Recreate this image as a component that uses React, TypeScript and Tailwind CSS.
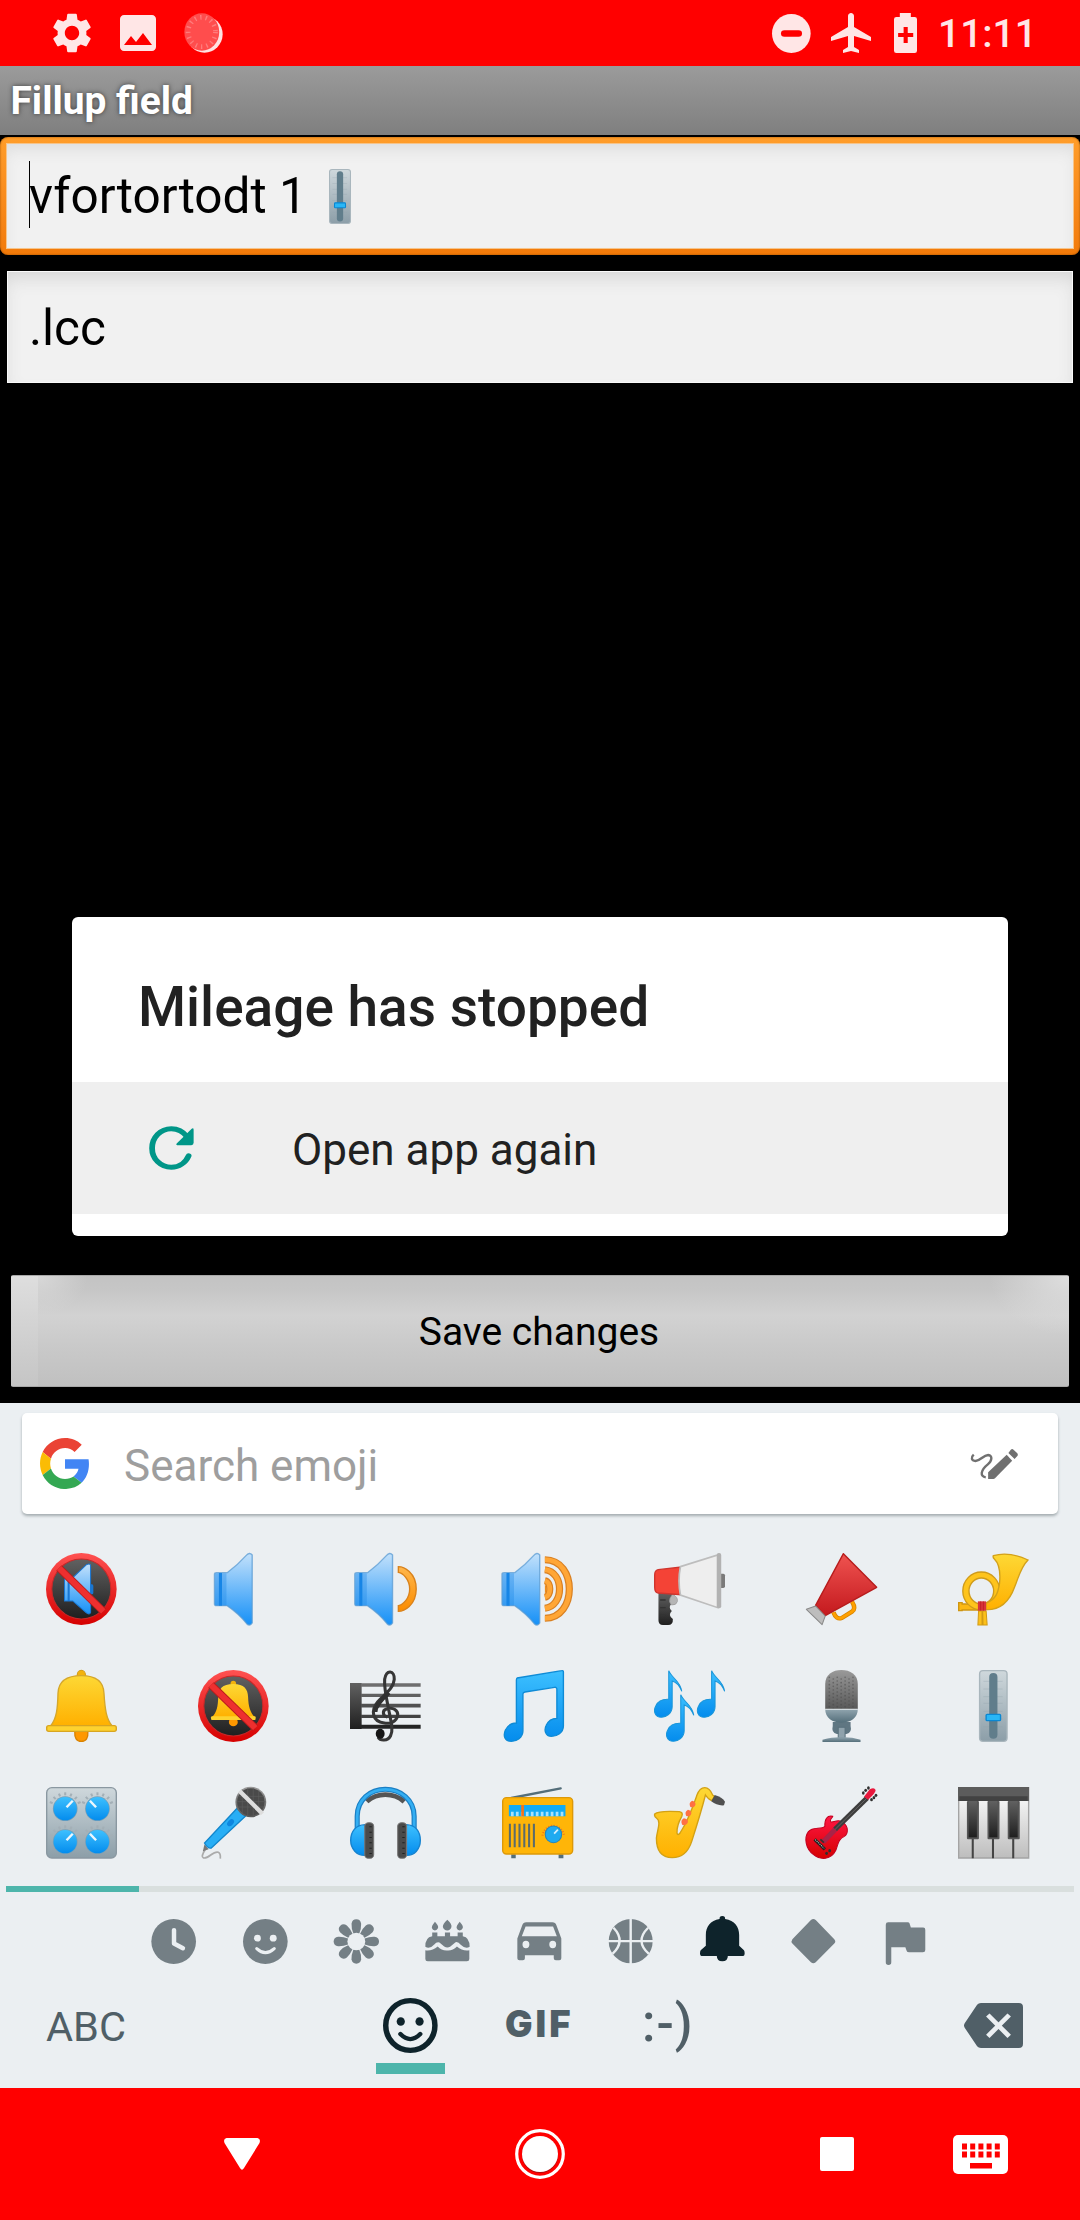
import type { ReactNode } from "react";
import { MdAirplanemodeActive, MdImage, MdSettings } from "react-icons/md";

type ArtProps = { vb: string; className?: string; children: ReactNode };

/* Drawing surface whose units are stretched to fill the element. */
function Art({ vb, className = "", children }: ArtProps) {
  return (
    <svg viewBox={vb} preserveAspectRatio="none" className={`block shrink-0 overflow-visible ${className}`} fill="none">
      {children}
    </svg>
  );
}

type GradProps = { id: string; from: string; to: string };
function Grad({ id, from, to }: GradProps) {
  return (
    <linearGradient id={id} x1="0" y1="0" x2="0" y2="1">
      <stop offset="0" stopColor={from} />
      <stop offset="1" stopColor={to} />
    </linearGradient>
  );
}

function Palette() {
  return (
    <svg className="absolute h-0 w-0">
      <defs>
        <Grad id="red" from="#ff5252" to="#d50000" />
        <Grad id="dark" from="#616161" to="#1f1f1f" />
        <Grad id="grey" from="#9a9a9a" to="#585858" />
        <Grad id="speaker" from="#c3e1fb" to="#1590f7" />
        <Grad id="blue" from="#3dc0ff" to="#048ced" />
        <Grad id="gold" from="#fdd835" to="#ffb000" />
        <Grad id="orange" from="#ffb74d" to="#fb8c00" />
        <Grad id="cone" from="#ef5350" to="#c4191e" />
        <Grad id="guitar" from="#ff1744" to="#d50000" />
        <Grad id="steel" from="#cfd8dc" to="#8c9ea8" />
        <Grad id="slate" from="#90a4ae" to="#546e7a" />
        <Grad id="ivory" from="#ffffff" to="#bdbdbd" />
      </defs>
    </svg>
  );
}

function SpeakerShape() {
  return (
    <g>
      <path d="M629 127H660Q690 105 715 76Q725 64 733 74V278Q726 289 717 280Q694 250 660 226H629Q623 226 623 221V132Q623 127 629 127Z" fill="url(#speaker)" stroke="#5a9bd3" strokeOpacity=".75" strokeWidth="4" />
      <path d="M625 129H658V225H625Z" fill="#1e88e5" fillOpacity=".35" />
      <path d="M636 128H645V226H636Z" fill="#1785e6" />
    </g>
  );
}

function Muted() {
  return (
    <Art vb="134 68 207 216" className="h-[72px] w-[71px]">
      <ellipse cx="237" cy="176" rx="103" ry="108" fill="url(#red)" />
      <ellipse cx="237" cy="176" rx="86" ry="90" fill="url(#dark)" stroke="#c62828" strokeWidth="3" />
      <path d="M264 162h4q4 0 4 5v20q0 5-4 5h-4z" fill="#1976d2" />
      <path d="M188 142H212L252 103Q264 97 264 108V246Q261 255 251 247L212 212H188Z" fill="url(#speaker)" stroke="#1976d2" strokeWidth="3" />
      <path d="M197 142h6v70h-6z" fill="#1976d2" />
      <path d="M172 113L301 243" stroke="#b71c1c" strokeWidth="23" />
      <path d="M172 113L301 243" stroke="#ee2f2f" strokeWidth="18" />
    </Art>
  );
}

function Speaker() {
  return (
    <Art vb="575 68 207 216" className="h-[72px] w-[71px]">
      <SpeakerShape />
    </Art>
  );
}

function SpeakerMid() {
  return (
    <Art vb="1016 68 207 216" className="h-[72px] w-[71px]">
      <g transform="translate(407 0)"><SpeakerShape /></g>
      <path d="M1157 109C1172 109 1209 126 1209 176C1209 226 1172 243 1157 243V226C1170 224 1190 205 1190 176C1190 147 1170 128 1157 126Z" fill="url(#orange)" stroke="#d9821b" strokeWidth="4" />
    </Art>
  );
}

function SpeakerLoud() {
  const arcs = [
    "M1583 88C1678 88 1678 264 1583 264",
    "M1583 118C1640 125 1640 227 1583 234",
    "M1583 151C1602 155 1602 197 1583 201",
  ];
  return (
    <Art vb="1458 68 207 216" className="h-[72px] w-[71px]">
      <g transform="translate(835 0)"><SpeakerShape /></g>
      {arcs.map((d) => (
        <g key={d}>
          <path d={d} stroke="#d98022" strokeWidth="21" />
          <path d={d} stroke="#ffa636" strokeWidth="14" />
        </g>
      ))}
      <path d="M1583 160Q1593 176 1583 191Z" fill="#ef8c1c" />
    </Art>
  );
}

function Loudspeaker() {
  return (
    <Art vb="331 68 207 216" className="h-[72px] w-[71px]">
      <path d="M344 187H388V200Q370 209 384 218Q370 231 383 242Q370 255 386 266Q387 284 372 284H357Q344 284 344 270Z" fill="url(#dark)" />
      <path d="M349 209h16M349 232h16M349 255h16" stroke="#333" strokeWidth="4" />
      <path d="M385 192Q402 200 399 214Q396 225 382 224Q373 215 378 203Z" fill="#b5b5b5" stroke="#999" strokeWidth="2" />
      <rect x="522" y="130" width="16" height="43" rx="5" fill="#7a7a7a" />
      <path d="M343 118L410 110V193L343 188Q333 187 333 170V135Q333 120 343 118Z" fill="#f44336" stroke="#cf342d" strokeWidth="4" />
      <path d="M408 109L517 74V232L408 194Q400 152 408 109Z" fill="#eeeeee" stroke="#bdbdbd" strokeWidth="5" />
      <rect x="514" y="68" width="13" height="166" rx="6" fill="#b2b2b2" />
    </Art>
  );
}

function Megaphone() {
  return (
    <Art vb="772 68 207 216" className="h-[72px] w-[71px]">
      <path d="M852 246Q860 269 876 263L906 244Q919 235 906 214" stroke="#d98500" strokeWidth="13" />
      <path d="M852 246Q860 269 876 263L906 244Q919 235 906 214" stroke="#ffa000" strokeWidth="8" />
      <path d="M881 70L978 171L828 256L800 225Z" fill="url(#cone)" stroke="#b71c1c" strokeWidth="4" strokeLinejoin="round" />
      <path d="M773 237L800 227L828 257L819 283Z" fill="#bdbdbd" stroke="#8a8a8a" strokeWidth="3" strokeLinejoin="round" />
    </Art>
  );
}

function Horn() {
  return (
    <Art vb="1214 68 207 216" className="h-[72px] w-[71px]">
      <path d="M1216 217h10v4h50v18h-50v2h-10z" fill="#fbb813" stroke="#cf9612" strokeWidth="4" />
      <path d="M1274 242h10v42h-12zM1286 242h10l3 42h-12z" fill="#fcc01a" stroke="#d29b14" strokeWidth="3" />
      <ellipse cx="1282" cy="182" rx="45" ry="48" stroke="#cf9b1b" strokeWidth="22" />
      <ellipse cx="1282" cy="182" rx="45" ry="48" stroke="#fec41c" strokeWidth="14" />
      <path d="M1317 76Q1362 62 1418 89C1396 112 1392 138 1379 170C1365 210 1340 240 1295 238V219C1327 206 1331 184 1335 160C1338 130 1337 103 1320 86Q1315 81 1317 76Z" fill="url(#gold)" stroke="#d3a11a" strokeWidth="4" />
      <path d="M1272 213h24v28h-24z" fill="#d9353b" />
      <path d="M1280 213v28M1288 213v28" stroke="#b71c1c" strokeWidth="2" />
    </Art>
  );
}

function Bell() {
  return (
    <Art vb="134 -90 207 216" className="h-[72px] w-[71px]">
      <ellipse cx="237" cy="-75" rx="12" ry="14" fill="#f3b20c" stroke="#d2990e" strokeWidth="3" />
      <path d="M218 94H256Q258 124 237 124Q216 124 218 94Z" fill="#ff9800" stroke="#d98200" strokeWidth="4" />
      <path d="M237 -73C285 -73 302 -50 303 -20C306 30 310 57 327 78H147C165 57 168 25 169 -20C170 -50 188 -73 237 -73Z" fill="url(#gold)" stroke="#d5a72b" strokeWidth="4" />
      <rect x="136" y="77" width="203" height="17" rx="6" fill="#fdd22f" stroke="#d8a521" strokeWidth="4" />
    </Art>
  );
}

function BellOff() {
  return (
    <Art vb="575 -90 207 216" className="h-[72px] w-[71px]">
      <ellipse cx="678" cy="18" rx="103" ry="108" fill="url(#red)" />
      <ellipse cx="678" cy="18" rx="86" ry="90" fill="url(#dark)" stroke="#c62828" strokeWidth="3" />
      <ellipse cx="678" cy="-50" rx="8" ry="8" fill="#f3b20c" />
      <ellipse cx="678" cy="66" rx="13" ry="13" fill="#ff9800" />
      <path d="M678 -48C710 -48 720 -32 721 -10C722 20 727 36 740 51H616C630 36 633 20 634 -10C635 -32 645 -48 678 -48Z" fill="url(#gold)" />
      <rect x="613" y="49" width="130" height="11" rx="3" fill="#fdd22f" />
      <path d="M613 -45L742 84" stroke="#b71c1c" strokeWidth="23" />
      <path d="M613 -45L742 84" stroke="#ee2f2f" strokeWidth="18" />
    </Art>
  );
}

function Score() {
  return (
    <Art vb="1016 -90 207 216" className="h-[72px] w-[71px]">
      <path d="M1016 -51h34v138h-34z" fill="url(#dark)" />
      <path d="M1048 -45h174" stroke="#6e6e6e" strokeWidth="11" />
      <path d="M1048 -14h174" stroke="#606060" strokeWidth="10" />
      <path d="M1048 17h174" stroke="#505050" strokeWidth="11" />
      <path d="M1048 49h174" stroke="#424242" strokeWidth="10" />
      <path d="M1048 80h174" stroke="#242424" strokeWidth="12" />
      <path d="M1125 51C1110 48 1110 31 1122 27C1142 19 1157 32 1155 46C1152 66 1132 72 1116 69C1079 64 1077 30 1097 5C1116 -17 1143 -33 1145 -62C1146 -90 1122 -93 1117 -62C1115 -35 1123 -2 1130 35C1138 75 1142 92 1134 108C1126 124 1104 123 1098 112" stroke="#363636" strokeWidth="9" />
      <path d="M1090 36C1090 20 1110 -4 1130 -22" stroke="#303030" strokeWidth="12" />
      <ellipse cx="1104" cy="101" rx="13" ry="15" fill="#161616" />
    </Art>
  );
}

function BeamedNotes() {
  return (
    <Art vb="1458 -90 207 216" className="h-[72px] w-[71px]">
      <path d="M1502 -66L1632 -88Q1637 -89 1637 -84V78C1637 98 1618 109 1602 109C1584 109 1580 90 1587 76C1594 60 1605 55 1618 55V-32Q1618 -39 1611 -38L1525 -24Q1519 -23 1519 -18V92C1519 113 1500 124 1485 124C1465 124 1461 106 1468 90C1476 74 1488 69 1500 69V-60Q1500 -65 1502 -66Z" fill="url(#blue)" stroke="#0f8bd6" strokeWidth="4" />
    </Art>
  );
}

const noteShape =
  "M374 -88C382 -66 408 -58 412 -26C404 -46 396 -54 384 -57V20C384 40 366 52 352 52C334 52 328 34 336 18C343 2 358 -3 374 -2Z";

function TripleNotes() {
  return (
    <Art vb="331 -90 207 216" className="h-[72px] w-[71px]">
      {["translate(0 0)", "translate(125 0)", "translate(35 72)"].map((t) => (
        <path key={t} d={noteShape} transform={t} fill="url(#blue)" stroke="#1a96da" strokeWidth="3" />
      ))}
    </Art>
  );
}

function StudioMic() {
  const dots: ReactNode[] = [];
  for (let r = 0; r < 9; r++) {
    for (let c = 0; c < 7; c++) {
      dots.push(<circle key={`${r}-${c}`} cx={840 + c * 11.5} cy={-68 + r * 11 + (c % 2) * 5} r="2.5" fill="#4b4b4b" fillOpacity=".55" />);
    }
  }
  return (
    <Art vb="772 -90 207 216" className="h-[72px] w-[71px]">
      <path d="M828 27V-48C828 -76 850 -90 875 -90C901 -90 923 -76 923 -48V27Z" fill="url(#grey)" />
      {dots}
      <path d="M850 66h52v12q5 20-12 24h-28q-17-4-12-24z" fill="#5f7682" />
      <path d="M828 28H923C923 54 902 68 875 68C849 68 828 54 828 28Z" fill="url(#slate)" />
      <path d="M828 28h95" stroke="#e0e6e8" strokeWidth="3" />
      <path d="M866 82h20v32h-20z" fill="#8fa2ac" stroke="#5a717d" strokeWidth="3" />
      <path d="M820 126V119Q850 112 866 112H886Q905 112 931 119V126Z" fill="url(#slate)" />
    </Art>
  );
}

function SliderShape() {
  return (
    <g>
      <rect x="1277" y="-88" width="80" height="212" rx="10" fill="url(#steel)" stroke="#a9b6bd" strokeWidth="4" />
      {[-56, -33, -10, 10, 34, 57, 80].map((y) => (
        <path key={y} d={`M1288 ${y}h56`} stroke="#92a3ac" strokeOpacity=".5" strokeWidth="2" />
      ))}
      <rect x="1305" y="-81" width="24" height="197" rx="12" fill="#607d8b" />
      <rect x="1296" y="43" width="42" height="19" rx="3" fill="#29b6f6" stroke="#0b87d2" strokeWidth="4" />
    </g>
  );
}

function LevelSlider() {
  return (
    <Art vb="1214 -90 207 216" className="h-[72px] w-[71px]">
      <SliderShape />
    </Art>
  );
}

function ControlKnobs() {
  const knobs = [
    { x: 190, y: 327, s: 1 },
    { x: 284, y: 327, s: -1 },
    { x: 190, y: 426, s: 1 },
    { x: 284, y: 426, s: -1 },
  ];
  return (
    <Art vb="134 262 207 216" className="h-[72px] w-[71px]">
      <rect x="136" y="264" width="203" height="211" rx="15" fill="url(#steel)" stroke="#8a98a1" strokeWidth="4" />
      {knobs.map(({ x, y, s }) => (
        <g key={`${x}-${y}`}>
          {[-66, -44, -22, 0, 22, 44, 66].map((a) => (
            <path key={a} d={`M${x} ${y - 49}v9`} transform={`rotate(${a} ${x} ${y})`} stroke="#a3afb6" strokeWidth="6" />
          ))}
          <ellipse cx={x} cy={y} rx="36" ry="37" fill="#77a0b8" />
          <ellipse cx={x} cy={y} rx="34" ry="35" fill="url(#blue)" />
          <path d={`M${x + 4 * s} ${y - 4}L${x + 22 * s} ${y - 24}`} stroke="#eef7fd" strokeWidth="7" />
        </g>
      ))}
    </Art>
  );
}

function Microphone() {
  return (
    <Art vb="575 262 207 216" className="h-[72px] w-[71px]">
      <path d="M597 448C574 484 598 477 612 466C632 451 642 456 640 477" stroke="#ababab" strokeWidth="5" />
      <path d="M594 434L606 449L589 455Z" fill="#777" />
      <path d="M689 326L713 350L614 445Q604 448 594 430Z" fill="#28aef5" stroke="#1286cc" strokeWidth="4" />
      <ellipse cx="670" cy="369" rx="8" ry="12" fill="#0d86df" transform="rotate(42 670 369)" />
      <ellipse cx="729" cy="307" rx="45" ry="46" fill="url(#grey)" />
      <ellipse cx="729" cy="307" rx="40" ry="41" fill="#4a4a4a" />
      <path d="M704 270v70M720 265v85M736 265v85M752 272v70M690 290h78M688 306h84M688 322h80" stroke="#5e5e5e" strokeWidth="2" />
      <path d="M696 274L763 342" stroke="#dddddd" strokeWidth="13" />
    </Art>
  );
}

function Headphones() {
  return (
    <Art vb="1016 262 207 216" className="h-[72px] w-[71px]">
      <path d="M1065 306C1095 278 1143 278 1174 306" stroke="#555" strokeWidth="14" />
      <path d="M1037 395V350C1037 300 1075 269 1119 269C1163 269 1203 300 1203 350V395" stroke="#1b7fc4" strokeWidth="15" />
      <path d="M1037 395V350C1037 300 1075 269 1119 269C1163 269 1203 300 1203 350V395" stroke="#33aef2" strokeWidth="8" />
      <path d="M1060 375C1032 376 1018 396 1018 422C1018 448 1036 468 1060 467ZM1180 375C1208 376 1221 396 1221 422C1221 448 1204 468 1180 467Z" fill="url(#blue)" stroke="#1683cf" strokeWidth="4" />
      {[1058, 1154].map((x) => (
        <g key={x}>
          <rect x={x + 1} y="369" width="26" height="107" rx="11" fill="#4a4a4a" stroke="#777" strokeWidth="3" />
          <path d={`M${x + 18} 380v86`} stroke="#222" strokeWidth="7" strokeDasharray="3 13" />
        </g>
      ))}
    </Art>
  );
}

function Radio() {
  return (
    <Art vb="1458 262 207 216" className="h-[72px] w-[71px]">
      <path d="M1485 295L1629 266" stroke="#546e7a" strokeWidth="7" strokeLinecap="round" />
      <path d="M1485 464h13v12h-13zM1623 464h14v12h-14z" fill="#546e7a" />
      <rect x="1460" y="294" width="204" height="169" rx="11" fill="#ffb508" stroke="#dd9909" strokeWidth="4" />
      <path d="M1478 316h165v34h-165z" fill="#12abf4" />
      <path d="M1484 343h156" stroke="#a9e1fb" strokeWidth="13" strokeDasharray="8 6.5" />
      <path d="M1514 316h8v34h-8z" fill="#f4741b" />
      <path d="M1481 372v71M1495 372v71M1509 372v71M1523 372v71M1537 372v71M1551 372v71" stroke="#5b6b6b" strokeWidth="6" />
      <path d="M1576 408A32 36 0 0 1 1639 408" stroke="#f4731b" strokeWidth="6" strokeDasharray="3 5" />
      <ellipse cx="1608" cy="404" rx="24" ry="25" fill="#1eaaf0" stroke="#2186bd" strokeWidth="3" />
      <path d="M1610 402l11-12" stroke="#d5effc" strokeWidth="5" />
    </Art>
  );
}

function Saxophone() {
  return (
    <Art vb="331 262 207 216" className="h-[72px] w-[71px]">
      <path d="M333 343Q345 332 405 336Q417 338 412 350C402 368 397 380 398 400Q400 409 407 400C432 360 445 320 456 287Q464 264 479 264Q493 264 502 286L508 291L500 303Q490 300 481 286C470 330 455 380 441 425C430 460 412 474 384 474C352 474 338 450 338 415C342 385 352 365 338 355Q331 350 333 343Z" fill="url(#gold)" stroke="#d3a114" strokeWidth="4" />
      <path d="M508 286Q530 292 538 306L535 317Q515 319 498 305Z" fill="#505050" />
      <path d="M442 303q10 2 10 11q-2 11-15 8q-6-13 5-19zM430 330q10 2 10 11q-2 11-15 8q-6-13 5-19zM418 356q12 2 12 11q-4 12-17 8q-6-13 5-19z" fill="#ff7043" />
    </Art>
  );
}

function Guitar() {
  return (
    <Art vb="772 262 207 216" className="h-[72px] w-[71px]">
      <path d="M827 380C826 360 833 346 850 350C848 356 840 358 844 366C850 371 864 356 880 368C896 380 896 402 884 410C864 420 866 435 859 452C845 481 815 482 794 465C770 447 766 414 779 396C792 380 816 391 827 380Z" fill="url(#guitar)" stroke="#c3001f" strokeWidth="3" />
      <path d="M822 427L861 385" stroke="#a92347" strokeWidth="15" />
      <path d="M857 389L950 295" stroke="#3d3d3d" strokeWidth="15" />
      <path d="M857 389L950 295" stroke="#777" strokeWidth="2" />
      <path d="M797 419L827 449" stroke="#222" strokeWidth="9" />
      <path d="M799 420L825 446" stroke="#cfcfcf" strokeWidth="3" strokeDasharray="3 3" />
      <path d="M814 419l10 10" stroke="#333" strokeWidth="5" />
      <path d="M941 291L958 269Q971 261 975 271Q976 279 953 300Z" fill="#e8173c" />
      {[[939, 280], [946, 272], [954, 265], [963, 300], [970, 294], [976, 287], [832, 461], [841, 453]].map(([x, y]) => (
        <ellipse key={`${x}-${y}`} cx={x} cy={y} rx="4" ry="5" fill="#2f2f2f" />
      ))}
    </Art>
  );
}

function Piano() {
  return (
    <Art vb="1214 262 207 216" className="h-[72px] w-[71px]">
      <path d="M1216 264h204v211h-204z" fill="url(#ivory)" stroke="#a4a4a4" strokeWidth="4" />
      <path d="M1257 418v58M1316 418v58M1375 418v58" stroke="#444" strokeWidth="6" />
      <path d="M1214 262h207v42h-207z" fill="#5c5c5c" />
      <path d="M1218 290h199v14h-199z" fill="#424242" />
      {[1240, 1300, 1359].map((x) => (
        <g key={x}>
          <rect x={x} y="304" width="35" height="115" rx="3" fill="#555" />
          <rect x={x + 5} y="304" width="24" height="109" fill="url(#dark)" />
        </g>
      ))}
    </Art>
  );
}

const emojiGrid: { name: string; Icon: () => ReactNode }[] = [
  { name: "muted speaker", Icon: Muted },
  { name: "speaker low", Icon: Speaker },
  { name: "speaker medium", Icon: SpeakerMid },
  { name: "speaker high", Icon: SpeakerLoud },
  { name: "loudspeaker", Icon: Loudspeaker },
  { name: "megaphone", Icon: Megaphone },
  { name: "postal horn", Icon: Horn },
  { name: "bell", Icon: Bell },
  { name: "bell with slash", Icon: BellOff },
  { name: "musical score", Icon: Score },
  { name: "musical note", Icon: BeamedNotes },
  { name: "musical notes", Icon: TripleNotes },
  { name: "studio microphone", Icon: StudioMic },
  { name: "level slider", Icon: LevelSlider },
  { name: "control knobs", Icon: ControlKnobs },
  { name: "microphone", Icon: Microphone },
  { name: "headphone", Icon: Headphones },
  { name: "radio", Icon: Radio },
  { name: "saxophone", Icon: Saxophone },
  { name: "guitar", Icon: Guitar },
  { name: "musical keyboard", Icon: Piano },
];

const tabGrey = "#747f85";

function CategoryTabs() {
  return (
    <div className="flex h-[98px] items-center pl-[128px]">
      <div className="flex w-[91.4px] justify-center">
        <Art vb="438 117 131 134" className="h-[45px] w-[45px]">
          <ellipse cx="504" cy="184" rx="65" ry="67" fill={tabGrey} />
          <path d="M505 150V190L531 204" stroke="#ebeff2" strokeWidth="13" strokeLinecap="round" strokeLinejoin="round" />
        </Art>
      </div>
      <div className="flex w-[91.4px] justify-center">
        <Art vb="703 117 131 134" className="h-[45px] w-[45px]">
          <ellipse cx="768" cy="184" rx="65" ry="67" fill={tabGrey} />
          <ellipse cx="745" cy="174" rx="10" ry="10" fill="#ebeff2" />
          <ellipse cx="791" cy="174" rx="10" ry="10" fill="#ebeff2" />
          <path d="M743 205Q768 229 794 205" stroke="#ebeff2" strokeWidth="9" strokeLinecap="round" />
        </Art>
      </div>
      <div className="flex w-[91.4px] justify-center">
        <Art vb="-65 -67 131 134" className="h-[45px] w-[45px]">
          {[0, 45, 90, 135, 180, 225, 270, 315].map((a) => (
            <path key={a} d="M-8 -22Q-15 -40 -14 -53Q-12 -66 0 -66Q12 -66 14 -53Q15 -40 8 -22Z" fill={tabGrey} transform={`rotate(${a})`} />
          ))}
          <circle r="26" fill="#ebeff2" />
        </Art>
      </div>
      <div className="flex w-[91.4px] justify-center">
        <Art vb="1230 117 131 134" className="h-[45px] w-[45px]">
          <g fill={tabGrey}>
            <path d="M1259 125Q1270 137 1268 144Q1265 151 1259 151Q1252 151 1250 144Q1249 137 1259 125ZM1295 119Q1309 132 1307 141Q1304 151 1295 151Q1285 151 1282 141Q1281 132 1295 119ZM1331 125Q1342 137 1340 144Q1337 151 1331 151Q1324 151 1322 144Q1321 137 1331 125Z" />
            <path d="M1251 157h15v11h22v-11h15v11h22v-11h15v11Q1360 171 1360 200Q1348 208 1334 194Q1327 184 1319 186L1303 200Q1294 204 1286 199L1272 187Q1264 184 1257 193Q1244 208 1231 200Q1230 171 1251 168Z" />
            <path d="M1231 210Q1250 213 1267 199Q1278 212 1295 211Q1311 212 1323 199Q1339 213 1359 210V236Q1359 243 1352 243H1238Q1231 243 1231 236Z" />
          </g>
        </Art>
      </div>
      <div className="flex w-[91.4px] justify-center">
        <Art vb="1494 117 131 134" className="h-[45px] w-[45px]">
          <path fillRule="evenodd" fill={tabGrey} d="M1521 127H1597Q1606 127 1609 136L1623 175V234Q1623 240 1617 240H1607Q1601 240 1601 234V225H1517V234Q1517 240 1511 240H1501Q1495 240 1495 234V175L1509 136Q1512 127 1521 127ZM1519 139L1508 168H1610L1599 139ZM1520 182A10 11 0 1 0 1520 204A10 11 0 1 0 1520 182ZM1598 182A10 11 0 1 0 1598 204A10 11 0 1 0 1598 182Z" />
        </Art>
      </div>
      <div className="flex w-[91.4px] justify-center">
        <Art vb="193 117 131 134" className="h-[45px] w-[45px]">
          <ellipse cx="259" cy="183" rx="64" ry="66" fill={tabGrey} />
          <path d="M259 115V251M193 183H325M209 143Q246 183 206 221M310 143Q270 183 312 221" stroke="#ebeff2" strokeWidth="7" />
        </Art>
      </div>
      <div className="flex w-[91.4px] justify-center">
        <Art vb="462 117 131 134" className="h-[45px] w-[45px]">
          <path fill="#0e232b" d="M519 117Q518 108 527 108Q536 108 535 117C563 121 576 140 576 165V197L590 210Q592 213 592 220Q592 227 588 227H543Q543 243 527 243Q511 243 511 227H466Q462 227 462 220Q462 213 464 210L479 197V165C479 140 492 121 519 117Z" />
        </Art>
      </div>
      <div className="flex w-[91.4px] justify-center">
        <Art vb="728 117 131 134" className="h-[45px] w-[45px]">
          <path fill={tabGrey} d="M786 120Q793 114 800 120L854 177Q860 184 854 190L800 246Q793 252 786 246L732 190Q727 184 732 177Z" />
        </Art>
      </div>
      <div className="flex w-[91.4px] justify-center">
        <Art vb="994 117 131 134" className="h-[45px] w-[45px]">
          <path fill={tabGrey} d="M1012 127H1069Q1073 127 1074 130L1078 142H1114Q1120 142 1120 149V209Q1120 216 1113 216H1073Q1067 216 1066 212L1062 201H1021V246Q1021 254 1013 254Q1005 254 1005 246V134Q1005 127 1012 127Z" />
        </Art>
      </div>
    </div>
  );
}

function StatusBar() {
  return (
    <header className="flex h-[66px] shrink-0 items-center bg-[#ff0000] pl-12 pr-[46px] text-[#ffe6e6]">
      <MdSettings className="size-12 shrink-0" />
      <MdImage className="ml-[18px] size-12 shrink-0" />
      <Art vb="535 39 114 120" className="ml-[22px] h-10 w-[39px]">
        <ellipse cx="595" cy="103" rx="53" ry="55" fill="#ffe1e1" />
        <ellipse cx="587" cy="96" rx="51" ry="56" fill="#ff4d4d" />
        <ellipse cx="587" cy="96" rx="40" ry="44" stroke="#ff7c7c" strokeWidth="14" strokeDasharray="4 12" />
      </Art>
      <div className="ml-auto flex items-center">
        <Art vb="671 41 113 118" className="h-[39px] w-[39px]">
          <ellipse cx="727" cy="100" rx="56" ry="59" fill="#ffe6e6" />
          <rect x="697" y="90" width="61" height="20" rx="10" fill="#ff0000" />
        </Art>
        <MdAirplanemodeActive className="ml-[16px] size-[48px] shrink-0" />
        <Art vb="1028 39 67 120" className="ml-[19px] h-10 w-[23px]">
          <path d="M1045 39h32v12h11q7 0 7 7v94q0 7-7 7h-53q-7 0-7-7v-94q0-7 7-7h10z" fill="#ffe6e6" />
          <path d="M1056 81h12v18h16v12h-16v18h-12v-18h-16v-12h16z" fill="#ff0000" />
        </Art>
        <span className="ml-[21px] w-[96px] pt-[2px] text-[39px] leading-none font-medium whitespace-nowrap">11:11</span>
      </div>
    </header>
  );
}

function CrashDialog() {
  return (
    <section className="absolute top-[851px] left-[72px] flex h-[319px] w-[936px] flex-col overflow-hidden rounded-[6px] bg-white text-[#212121]">
      <h2 className="flex h-[165px] items-center pt-[15px] pl-[66px] text-[55px] leading-none font-medium">Mileage has stopped</h2>
      <button className="flex h-[132px] items-center bg-[#efefef] pl-[77px] text-left">
        <Art vb="232 677 117 133" className="h-[44px] w-[45px]">
          <path d="M335 767C327 788 310 802 290 802C262 802 240 776 240 744C240 711 262 685 290 685C306 685 321 694 331 709" stroke="#009688" strokeWidth="15" strokeLinecap="round" />
          <path d="M343 685Q348 682 348 688V728Q348 735 342 735H305Q301 734 304 730Z" fill="#009688" />
        </Art>
        <span className="pt-1 pl-[98px] text-[44px] leading-none">Open app again</span>
      </button>
    </section>
  );
}

function AppWindow() {
  return (
    <main className="relative flex h-[1337px] shrink-0 flex-col bg-black">
      <h1 className="flex h-[69px] items-center bg-linear-to-b from-[#9b9b9b] to-[#7f7f7f] pt-[2px] pl-[10.5px] text-[38.9px] leading-none font-bold text-white [text-shadow:0_0_5px_rgba(0,0,0,0.6)]">
        Fillup field
      </h1>
      <div className="mt-[2px] h-[118px] rounded-[8px] bg-linear-to-b from-[#ff9d2a] to-[#f27a08] p-[7px] shadow-[inset_0_0_2px_#8a4500]">
        <div className="flex h-full items-center bg-[#f1f1f1] pl-[22px] text-[49.5px] leading-none text-black shadow-[inset_0_9px_16px_-4px_#dcdcdc,0_0_0_1px_#f6c48a]">
          <span className="mr-[-1px] mb-[4px] h-[67px] w-px bg-black" />
          <span className="pt-[2px]">vfortortodt 1</span>
          <Art vb="1275 -90 84 216" className="ml-[22px] h-[55px] w-[22px]">
            <SliderShape />
          </Art>
        </div>
      </div>
      <div className="mx-[7px] mt-[16px] flex h-[112px] items-center border border-[#fafafa] bg-[#f1f1f1] pt-[4px] pl-[21px] text-[49.5px] leading-none text-black shadow-[inset_0_10px_18px_-4px_#d6d6d6]">
        .lcc
      </div>
      <button className="relative mx-[11px] mt-auto mb-[16px] flex h-[112px] items-center justify-center overflow-hidden rounded-[2px] border-t border-b border-[#a8a8a8] bg-[linear-gradient(to_bottom,#c3c3c3_0%,#c6c6c6_12%,#d2d2d2_36%,#c9c9c9_65%,#c0c0c0_100%)] pt-[2px] text-[39px] leading-none text-black">
        <span className="absolute inset-y-0 left-0 w-[27px] bg-linear-to-b from-[#dedede] to-[#c5c5c5]" />
        <span className="absolute top-0 left-[27px] h-[40px] w-[50px] bg-[radial-gradient(ellipse_at_top_left,#d8d8d8,transparent_70%)]" />
        <span className="absolute top-0 right-0 h-[60px] w-[80px] bg-[radial-gradient(ellipse_at_top_right,#dedede,transparent_70%)]" />
        <span className="pr-[2px]">Save changes</span>
      </button>
      <CrashDialog />
    </main>
  );
}

function EmojiKeyboard() {
  return (
    <section className="flex h-[685px] shrink-0 flex-col bg-[#ebeff2]">
      <div className="mx-[22px] mt-[10px] flex h-[101px] shrink-0 items-center rounded-[5px] bg-white pr-[40px] pl-[18px] shadow-[0_2px_3px_rgba(60,75,80,0.4)]">
        <svg viewBox="2 2 44 44" preserveAspectRatio="none" className="h-[51px] w-[50px] shrink-0">
          <path fill="#EA4335" d="M24 9.5c3.54 0 6.71 1.22 9.21 3.6l6.85-6.85C35.9 2.38 30.47 0 24 0 14.62 0 6.51 5.38 2.56 13.22l7.98 6.19C12.43 13.72 17.74 9.5 24 9.5z" transform="translate(2 2) scale(.917)" />
          <path fill="#4285F4" d="M46.98 24.55c0-1.57-.15-3.09-.38-4.55H24v9.02h12.94c-.58 2.96-2.26 5.48-4.78 7.18l7.73 6c4.51-4.18 7.09-10.36 7.09-17.65z" transform="translate(2 2) scale(.917)" />
          <path fill="#FBBC05" d="M10.53 28.59c-.48-1.45-.76-2.99-.76-4.59s.27-3.14.76-4.59l-7.98-6.19C.92 16.46 0 20.12 0 24c0 3.88.92 7.54 2.56 10.78l7.97-6.19z" transform="translate(2 2) scale(.917)" />
          <path fill="#34A853" d="M24 48c6.48 0 11.93-2.13 15.89-5.81l-7.73-6c-2.15 1.45-4.92 2.3-8.16 2.3-6.26 0-11.57-4.22-13.47-9.91l-7.98 6.19C6.51 42.62 14.62 48 24 48z" transform="translate(2 2) scale(.917)" />
        </svg>
        <span className="flex-1 pt-1 pl-[34px] text-[44px] leading-none text-[#9e9e9e]">Search emoji</span>
        <Art vb="1251 567 137 90" className="h-[30px] w-[47px]">
          <path d="M1259 584C1250 592 1252 603 1264 603C1279 602 1286 586 1301 585C1315 586 1312 604 1300 613C1278 631 1277 650 1294 652" stroke="#707070" strokeWidth="7" />
          <path d="M1355 584L1371 602L1321 655Q1319 657 1316 657H1301V637Z" fill="#707070" />
          <path d="M1367 569Q1371 565 1375 569L1386 580Q1389 584 1386 588L1378 597L1360 579Z" fill="#707070" />
        </Art>
      </div>
      <div className="mx-[5.5px] mt-[16px] grid grid-cols-[repeat(7,152px)] grid-rows-[repeat(3,117px)]">
        {emojiGrid.map(({ name, Icon }) => (
          <div key={name} aria-label={name} className="flex items-center justify-center">
            <Icon />
          </div>
        ))}
      </div>
      <div className="mx-[6px] mt-auto h-[6px] shrink-0 bg-[#d9dfde]">
        <div className="h-full w-[133px] bg-[#4db5ab]" />
      </div>
      <CategoryTabs />
      <div className="flex h-[98px] shrink-0 items-start text-[#505f67]">
        <div className="flex h-[73px] w-[376px] items-center pl-[46px] text-[41.5px] leading-none">ABC</div>
        <div className="flex w-[69px] flex-col items-center">
          <div className="flex h-[71px] items-center">
            <Art vb="1112 353 161 166" className="h-[55px] w-[55px]">
              <ellipse cx="1192" cy="436" rx="72" ry="75" stroke="#0e232b" strokeWidth="16" />
              <ellipse cx="1164" cy="424" rx="12" ry="13" fill="#0e232b" />
              <ellipse cx="1219" cy="424" rx="12" ry="13" fill="#0e232b" />
              <path d="M1163 462Q1192 492 1221 462" stroke="#0e232b" strokeWidth="13" strokeLinecap="round" />
            </Art>
          </div>
          <div className="mt-[2px] h-[11px] w-full bg-[#4db5ab]" />
        </div>
        <div className="ml-[60px] flex h-[69px] w-[68px] items-center font-[Inter] text-[36.5px] leading-none font-black tracking-[3px]">GIF</div>
        <div className="ml-[69px] flex h-[66px] w-[60px] items-center text-[51px] leading-none font-medium tracking-[1px]">:-)</div>
        <div className="mr-[57px] ml-auto flex h-[71px] items-center">
          <Art vb="1231 369 171 135" className="h-[45px] w-[59px]">
            <path d="M1280 369H1390Q1402 369 1402 381V491Q1402 504 1390 504H1280Q1273 504 1269 499L1233 443Q1229 437 1233 430L1269 374Q1273 369 1280 369Z" fill="#505f67" />
            <path d="M1300 405L1362 469M1362 405L1300 469" stroke="#ebeff2" strokeWidth="14" />
          </Art>
        </div>
      </div>
    </section>
  );
}

function NavigationBar() {
  return (
    <nav className="flex h-[132px] shrink-0 items-center bg-[#ff0000]">
      <svg viewBox="0 0 36 32" className="ml-[224px] h-[32px] w-[36px] shrink-0">
        <path d="M2.5 0H33.5Q37 1 35.5 5L20 30Q18 33.5 16 30L.5 5Q-1 1 2.5 0Z" fill="#fff" />
      </svg>
      <svg viewBox="0 0 50 50" className="ml-[255px] size-[50px] shrink-0">
        <circle cx="25" cy="25" r="23.3" fill="none" stroke="#fff" strokeWidth="3.2" />
        <circle cx="25" cy="26" r="18" fill="#8a1010" fillOpacity=".7" />
        <circle cx="25" cy="25" r="18" fill="#fff" />
      </svg>
      <div className="ml-[255px] size-[34px] shrink-0 rounded-[2px] bg-white" />
      <svg viewBox="0 0 55 39" className="ml-[99px] h-[39px] w-[55px] shrink-0">
        <rect width="55" height="39" rx="5" fill="#fff" />
        <g fill="#f00">
          {[9, 17.2, 25.4, 33.6, 41.8].map((x) => (
            <g key={x}>
              <rect x={x} y="8.5" width="5" height="6" />
              <rect x={x} y="16.5" width="5" height="6" />
            </g>
          ))}
          <rect x="17" y="28" width="22" height="5.5" />
        </g>
      </svg>
    </nav>
  );
}

export default function App() {
  return (
    <div className="flex h-[2220px] w-[1080px] flex-col overflow-hidden bg-black font-[Roboto,sans-serif]">
      <Palette />
      <StatusBar />
      <AppWindow />
      <EmojiKeyboard />
      <NavigationBar />
    </div>
  );
}
